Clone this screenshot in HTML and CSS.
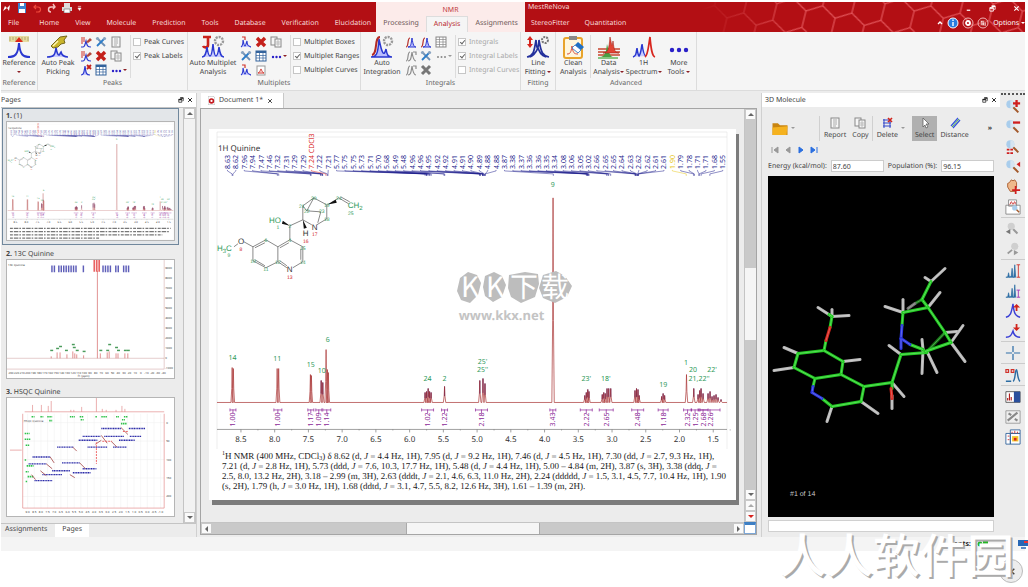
FILE: index.html
```html
<!DOCTYPE html>
<html lang="en">
<head>
    <meta charset="UTF-8">
    <meta name="viewport" content="width=device-width, initial-scale=1.0">
    <title>MestReNova</title>
    <link rel="stylesheet" href="styles.css">
</head>
<body>
    <svg class="defs" aria-hidden="true">
      <defs>
        <symbol id="i-reference" viewBox="0 0 24 24">
          <rect x="2" y="1" width="20" height="6" fill="#e6dca0"/>
          <path d="M3 2v4M6 2v3M9 2v4M15 2v4M18 2v3M21 2v4" stroke="#999060" stroke-width=".7"/>
          <path d="M8 7l4-5 4 5z" fill="#e02818"/>
          <path d="M1 22c7 0 10-2 11-14 1 12 4 14 11 14" fill="none" stroke="#2a38d0" stroke-width="2"/>
        </symbol>
        <symbol id="i-autopeak" viewBox="0 0 24 24">
          <path d="M5 11l9-9 7-1-3 4 1 3-4 1-3 3-5 1z" fill="#c9b52c" stroke="#77691c"/>
          <path d="M7 11l5-5" stroke="#fff6b0" stroke-width="1.5"/>
          <path d="M1 22c7 0 8-2 9-9 1 5 2 7 3 7s1-2 2-3c1 4 3 5 7 5" fill="#c9ccff" stroke="#2a38d0" stroke-width="1.6"/>
        </symbol>
        <symbol id="i-multiplet" viewBox="0 0 24 24">
          <path d="M2 2h8M7 2v8c0 3-4 3-5 1" fill="none" stroke="#c9221c" stroke-width="2.6"/>
          <circle cx="18" cy="6" r="4" fill="none" stroke="#999" stroke-width="2.4" stroke-dasharray="2 1"/>
          <path d="M1 22c3 0 4-3 5-10 1 7 2 9 3 9s2-2 3-12c1 10 2 12 3 12s2-2 3-9c1 7 2 10 5 10" fill="#c9ccff" stroke="#2a38d0" stroke-width="1.5"/>
        </symbol>
        <symbol id="i-integration" viewBox="0 0 24 24">
          <path d="M1 22c5 0 7-2 8-18 3 15 5 18 7 10 1 6 2 8 6 8z" fill="#b9bdff" stroke="#2a38d0" stroke-width="1.5"/>
          <path d="M2 20c6-1 2-18 8-18" fill="none" stroke="#b32a25" stroke-width="2"/>
          <circle cx="18" cy="6" r="4" fill="none" stroke="#999" stroke-width="2.4" stroke-dasharray="2 1"/>
        </symbol>
        <symbol id="i-fitting" viewBox="0 0 24 24">
          <path d="M4 1l3 4H5v4h2l-3 4-3-4h2V5H1z" fill="#d6231c"/>
          <path d="M1 22c6-1 7-4 9-17 1 12 2 12 3 0 2 13 4 16 10 17M4 22c5-2 6-5 8-9 2 5 3 7 8 9" fill="none" stroke="#23309c" stroke-width="1.7"/>
          <circle cx="19" cy="5" r="3" fill="none" stroke="#777" stroke-width="2" stroke-dasharray="2 1"/>
        </symbol>
        <symbol id="i-clean" viewBox="0 0 24 24">
          <rect x="3" y="3" width="18" height="20" rx="2" fill="#fff6dc" stroke="#e8a32b" stroke-width="2"/>
          <rect x="8" y="1" width="8" height="4" fill="#888"/>
          <path d="M6 19c3 0 4-1 5-8 1 7 2 8 6 8" fill="none" stroke="#d64a3c"/>
          <path d="M11 13l6-6 6 5-6 6z" fill="#1f6fc4"/>
          <path d="M11 13l3-3 6 5-3 3z" fill="#fff" stroke="#1f6fc4" stroke-width=".7"/>
        </symbol>
        <symbol id="i-data" viewBox="0 0 24 24">
          <path d="M1 14h22M1 17h22M1 20h22" stroke="#c8452f" stroke-width="1.4"/>
          <path d="M3 22c5 0 6-5 7-13 2 8 3 13 6 13z" fill="#4aa043"/>
          <path d="M6 18c5 0 6-4 7-16 2 9 2 11 3 4 1 9 2 12 6 12z" fill="#e14434" stroke="#a82015" stroke-width=".6"/>
          <path d="M1 23h20" stroke="#58b04e" stroke-width="1.4"/>
        </symbol>
        <symbol id="i-spectrum" viewBox="0 0 24 24">
          <path d="M1 22c3-1 3-3 4-9 1 7 2 8 2 8 2-3 2-6 3-12 1 7 2 12 4 12" fill="#c9ccff" stroke="#2a38d0" stroke-width="1.5"/>
          <path d="M13 22c3-2 3-8 5-20 1 12 2 19 5 20" fill="none" stroke="#d8261e" stroke-width="1.7"/>
        </symbol>
        <symbol id="i-more" viewBox="0 0 24 24">
          <g fill="#2a20c8"><circle cx="5" cy="15" r="2.200"/><circle cx="12" cy="15" r="2.200"/><circle cx="19" cy="15" r="2.200"/></g>
        </symbol>
        <symbol id="i-pick" viewBox="0 0 12 12">
          <path d="M1 11h2c2 0 2-3 3-6 1 4 1 6 5 6" fill="none" stroke="#2a38d0" stroke-width="1.2"/>
          <path d="M2 1v7M4 1v5" stroke="#d0322b"/>
          <path d="M6 6l4-4 2 2-4 3z" fill="#b3483c"/>
        </symbol>
        <symbol id="i-pickdel" viewBox="0 0 12 12">
          <path d="M1 11c3 0 3-3 4-9 1 7 1 9 5 9" fill="#c9ccff" stroke="#2a38d0" stroke-width="1.2"/>
          <path d="M7 1l4 4M11 1l-4 4" stroke="#c4201a" stroke-width="1.8"/>
        </symbol>
        <symbol id="i-peaks" viewBox="0 0 12 12">
          <path d="M1 11c2-1 2-4 2-7 1 4 1 6 2 6s1-3 2-5c0 3 1 5 2 5s1 1 2 1" fill="#c9ccff" stroke="#2a38d0" stroke-width="1.1"/>
          <path d="M2 1h3v3" fill="none" stroke="#d0322b" stroke-width="1.2"/>
        </symbol>
        <symbol id="i-integral" viewBox="0 0 12 12">
          <path d="M3 11c3 0 3-3 4-9 1 7 2 9 4 9z" fill="#b9bdff" stroke="#2a38d0"/>
          <path d="M1 11c3 0 1-9 4-9" fill="none" stroke="#b32a25" stroke-width="1.2"/>
        </symbol>
        <symbol id="i-integral-off" viewBox="0 0 12 12">
          <path d="M3 11c3 0 3-3 4-9 1 7 2 9 4 9M1 11c3 0 1-9 4-9M8 2h3v3" fill="none" stroke="#8d8d8d" stroke-width="1.2"/>
        </symbol>
        <symbol id="i-tools" viewBox="0 0 12 12">
          <path d="M2 2l8 8" stroke="#6d8fb5" stroke-width="1.8"/>
          <path d="M10 2l-8 8" stroke="#2b7cc9" stroke-width="1.8"/>
          <circle cx="2.500" cy="2.500" r="1.600" fill="#8aa4c0"/><circle cx="9.500" cy="2.500" r="1.600" fill="#8aa4c0"/>
        </symbol>
        <symbol id="i-cross" viewBox="0 0 12 12">
          <path d="M2 2l8 8M10 2l-8 8" stroke="#c4201a" stroke-width="3.400"/>
        </symbol>
        <symbol id="i-cross-off" viewBox="0 0 12 12">
          <path d="M2 2l8 8M10 2l-8 8" stroke="#777" stroke-width="3"/>
        </symbol>
        <symbol id="i-report" viewBox="0 0 12 12">
          <rect x="2" y="1" width="8" height="10" fill="#f6f6f6" stroke="#888"/>
          <path d="M4 3h4M4 5h4M4 7h4M4 9h3" stroke="#999" stroke-width=".8"/>
        </symbol>
        <symbol id="i-copy" viewBox="0 0 12 12">
          <rect x="1" y="1" width="6" height="8" fill="#f6f6f6" stroke="#888"/>
          <rect x="5" y="3" width="6" height="8" fill="#f6f6f6" stroke="#888"/>
          <path d="M6 6h4M6 8h4M8 4v6" stroke="#aaa" stroke-width=".7"/>
        </symbol>
        <symbol id="i-table" viewBox="0 0 12 12">
          <rect x="1" y="1" width="10" height="10" fill="#fff" stroke="#33639c"/>
          <path d="M1 2h10" stroke="#33639c" stroke-width="2"/>
          <path d="M1 5.500h10M1 8h10M4.500 2v9M8 2v9" stroke="#33639c" stroke-width=".7"/>
        </symbol>
        <symbol id="i-table-off" viewBox="0 0 12 12">
          <rect x="1" y="1" width="10" height="10" fill="#fff" stroke="#888"/>
          <path d="M1 3.500h10M1 6h10M1 8.500h10M4.500 1v10M8 1v10" stroke="#888" stroke-width=".7"/>
        </symbol>
        <symbol id="i-page" viewBox="0 0 12 12">
          <rect x="2" y="2" width="8" height="9" fill="#fff" stroke="#999"/>
          <path d="M3 9c3-1 2-4 3-4s0 3 3 4z" fill="none" stroke="#d0322b"/>
        </symbol>
        <symbol id="i-dots" viewBox="0 0 12 12">
          <g fill="#2a20c8"><circle cx="3" cy="7" r="1.200"/><circle cx="6.500" cy="7" r="1.200"/><circle cx="10" cy="7" r="1.200"/></g>
        </symbol>
        <symbol id="i-dots-off" viewBox="0 0 12 12">
          <g fill="#888"><circle cx="3" cy="7" r="1"/><circle cx="6.500" cy="7" r="1"/><circle cx="10" cy="7" r="1"/></g>
        </symbol>
        <symbol id="i-restore" viewBox="0 0 8 8">
          <path d="M3 1h4v4H6M1 3h4v4H1z" fill="none" stroke="currentColor"/><path d="M1 3.500h4M3 1.500h4" stroke="currentColor" stroke-width="1.400"/>
        </symbol>
        <symbol id="i-close" viewBox="0 0 8 8">
          <path d="M1.500 1.500l5 5M6.500 1.500l-5 5" stroke="currentColor" stroke-width="1.300"/>
        </symbol>
        <symbol id="i-lens" viewBox="0 0 18 18">
          <path d="M9 9l6 6" stroke="#a3592b" stroke-width="2.200"/>
          <circle cx="6" cy="6" r="4.500" fill="#a9cdec"/>
          <path d="M6 1.500a4.500 4.500 0 0 1 0 9z" fill="#d5e4f1"/>
        </symbol>
        <symbol id="i-lens-off" viewBox="0 0 18 18">
          <path d="M9 9l5 5" stroke="#999" stroke-width="2.200"/>
          <circle cx="7" cy="6" r="4" fill="#cfcfcf"/>
        </symbol>
      </defs>
    </svg>

    <div class="app">
      <header class="titlebar">
        <div class="title-main">
          <div class="quick">
            <svg class="quick-icon" viewBox="0 0 10 10"><path d="M1 8l2-5 2 2 3-3-1 6-2-3z" fill="#fff"/></svg>
            <svg class="quick-icon" viewBox="0 0 10 10"><path d="M1 0h8v10H1z" fill="#3d83cf"/><path d="M3 0h4v3H3zM2 6h6v4H2z" fill="#fff"/></svg>
            <svg class="quick-icon" viewBox="0 0 10 10"><path d="M2 4h4a2 2 0 0 1 0 5H4M4 2L2 4l2 2" fill="none" stroke="#ef4a3c" stroke-width="1.200"/></svg>
            <svg class="quick-icon" viewBox="0 0 10 10"><path d="M8 4H4a2 2 0 0 0 0 5M6 1l2 3-2 2" fill="none" stroke="#f3c2c0" stroke-width="1.400"/></svg>
            <svg class="quick-icon" viewBox="0 0 10 10"><path d="M2 0h6v4H2zM0 4h10v4H0z" fill="#ddd"/><path d="M2 6h6v4H2z" fill="#fff" stroke="#777" stroke-width=".7"/></svg>
            <svg class="quick-more" viewBox="0 0 6 10"><path d="M1 3h4M1 5h4l-2 3z" fill="#fff" stroke="#fff" stroke-width=".7"/></svg>
          </div>
          <nav class="tabs">
            <a class="tab tab-file" href="#">File</a>
            <a class="tab" href="#">Home</a>
            <a class="tab" href="#">View</a>
            <a class="tab" href="#">Molecule</a>
            <a class="tab" href="#">Prediction</a>
            <a class="tab" href="#">Tools</a>
            <a class="tab" href="#">Database</a>
            <a class="tab" href="#">Verification</a>
            <a class="tab" href="#">Elucidation</a>
          </nav>
        </div>
        <div class="title-nmr">
          <div class="context-name">NMR</div>
          <nav class="tabs">
            <a class="tab" href="#">Processing</a>
            <a class="tab tab-active" href="#">Analysis</a>
            <a class="tab" href="#">Assignments</a>
          </nav>
        </div>
        <div class="title-rest">
          <svg class="hexes" aria-hidden="true">
            <defs>
              <pattern id="hex" width="30" height="52" patternUnits="userSpaceOnUse" patternTransform="rotate(14)">
                <path d="M0 9L15 0l15 9v17l-15 9-15-9zM15 35v17" fill="none" stroke="#e2555a" stroke-width="1.200"/>
              </pattern>
            </defs>
            <rect width="100%" height="100%" fill="url(#hex)"/>
          </svg>
          <div class="title-left">
            <div class="app-name">MestReNova</div>
            <nav class="tabs">
              <a class="tab" href="#">StereoFitter</a>
              <a class="tab" href="#">Quantitation</a>
            </nav>
          </div>
          <div class="title-right">
            <div class="window-buttons">
              <button aria-label="Minimize"><svg viewBox="0 0 8 8"><path d="M2 6h4" stroke="#fff" stroke-width="1.400"/></svg></button>
              <button aria-label="Restore"><svg><use href="#i-restore"/></svg></button>
              <button aria-label="Close"><svg><use href="#i-close"/></svg></button>
            </div>
            <div class="options">
              <svg class="up" viewBox="0 0 8 8"><path d="M2 5l2-2 2 2" fill="none" stroke="#fff" stroke-width="1.400"/></svg>
              <svg viewBox="0 0 12 12"><circle cx="6" cy="6" r="5" fill="#2b7de0" stroke="#fff"/><path d="M6 5v4M6 2.500v1.500" stroke="#fff" stroke-width="1.400"/></svg>
              <svg viewBox="0 0 12 12"><circle cx="6" cy="6" r="5" fill="none" stroke="#f0b4b4"/><circle cx="6" cy="6" r="2" fill="none" stroke="#fff" stroke-width="1.800"/></svg>
              <svg viewBox="0 0 12 12"><circle cx="6" cy="6" r="5" fill="none" stroke="#f0b4b4"/><path d="M3.500 3.500h4v5h-4zM5 5h4v4H5z" fill="#f3d2d2" stroke="#b01010" stroke-width=".5"/></svg>
              <button class="options-button">Options <i class="caret light"></i></button>
            </div>
          </div>
        </div>
      </header>

      <section class="ribbon">
        <div class="group g-reference">
          <div class="group-body">
            <button class="big"><svg><use href="#i-reference"/></svg>Reference<span><i class="caret"></i></span></button>
          </div>
          <div class="group-name">Reference</div>
        </div>
        <div class="group g-peaks">
          <div class="group-body">
            <button class="big w-peak"><svg><use href="#i-autopeak"/></svg>Auto Peak<span>Picking</span></button>
            <div class="minis">
              <button aria-label="Pick peak"><svg><use href="#i-pick"/></svg></button>
              <button aria-label="Peak options"><svg><use href="#i-tools"/></svg></button>
              <button aria-label="Report peaks"><svg><use href="#i-report"/></svg></button>
              <button aria-label="Peak by peak"><svg><use href="#i-pick"/></svg></button>
              <button aria-label="Clear peaks"><svg><use href="#i-cross"/></svg></button>
              <button aria-label="Copy peaks"><svg><use href="#i-copy"/></svg></button>
              <button aria-label="Delete peaks"><svg><use href="#i-pickdel"/></svg></button>
              <button aria-label="Peaks table"><svg><use href="#i-table"/></svg></button>
              <button aria-label="More peaks" class="with-caret"><svg><use href="#i-dots"/></svg><i class="caret"></i></button>
            </div>
            <div class="checks">
              <label><input type="checkbox">Peak Curves</label>
              <label><input type="checkbox" checked>Peak Labels</label>
            </div>
          </div>
          <div class="group-name">Peaks</div>
        </div>
        <div class="group g-multiplets">
          <div class="group-body">
            <button class="big w-multiplet"><svg><use href="#i-multiplet"/></svg>Auto Multiplet<span>Analysis</span></button>
            <div class="minis">
              <button aria-label="Multiplet manual"><svg><use href="#i-peaks"/></svg></button>
              <button aria-label="Clear multiplets"><svg><use href="#i-cross"/></svg></button>
              <button aria-label="Copy multiplets"><svg><use href="#i-copy"/></svg></button>
              <button aria-label="Multiplet options"><svg><use href="#i-tools"/></svg></button>
              <button aria-label="Multiplets table"><svg><use href="#i-table"/></svg></button>
              <button aria-label="More multiplets" class="with-caret"><svg><use href="#i-dots"/></svg><i class="caret"></i></button>
              <button aria-label="J groups"><svg><use href="#i-peaks"/></svg></button>
              <button aria-label="Report multiplets"><svg><use href="#i-page"/></svg></button>
            </div>
            <div class="checks">
              <label><input type="checkbox">Multiplet Boxes</label>
              <label><input type="checkbox" checked>Multiplet Ranges</label>
              <label><input type="checkbox">Multiplet Curves</label>
            </div>
          </div>
          <div class="group-name">Multiplets</div>
        </div>
        <div class="group g-integrals">
          <div class="group-body">
            <button class="big w-integral"><svg><use href="#i-integration"/></svg>Auto<span>Integration</span></button>
            <div class="minis">
              <button aria-label="Manual integral"><svg><use href="#i-integral"/></svg></button>
              <button aria-label="Predefined regions"><svg><use href="#i-integral"/></svg></button>
              <button aria-label="Integrals table"><svg><use href="#i-table-off"/></svg></button>
              <button aria-label="Copy integrals"><svg><use href="#i-integral-off"/></svg></button>
              <button aria-label="Integral options"><svg><use href="#i-tools"/></svg></button>
              <button aria-label="More integrals" class="with-caret"><svg><use href="#i-dots-off"/></svg><i class="caret off"></i></button>
              <button aria-label="Split integral"><svg><use href="#i-integral-off"/></svg></button>
              <button aria-label="Clear integrals"><svg><use href="#i-cross-off"/></svg></button>
            </div>
            <div class="checks disabled">
              <label><input type="checkbox" checked>Integrals</label>
              <label><input type="checkbox" checked>Integral Labels</label>
              <label><input type="checkbox">Integral Curves</label>
            </div>
          </div>
          <div class="group-name">Integrals</div>
        </div>
        <div class="group g-fitting">
          <div class="group-body">
            <button class="big"><svg><use href="#i-fitting"/></svg>Line<span>Fitting <i class="caret"></i></span></button>
          </div>
          <div class="group-name">Fitting</div>
        </div>
        <div class="group g-advanced">
          <div class="group-body">
            <button class="big divided"><svg><use href="#i-clean"/></svg>Clean<span>Analysis</span></button>
            <button class="big"><svg><use href="#i-data"/></svg>Data<span>Analysis<i class="caret"></i></span></button>
            <button class="big"><svg><use href="#i-spectrum"/></svg>1H<span>Spectrum<i class="caret"></i></span></button>
            <button class="big"><svg><use href="#i-more"/></svg>More<span>Tools <i class="caret"></i></span></button>
          </div>
          <div class="group-name">Advanced</div>
        </div>
      </section>

      <main class="work">
        <aside class="pages">
          <div class="panel-head">
            <span>Pages</span>
            <button aria-label="Float"><svg><use href="#i-restore"/></svg></button>
            <button aria-label="Close pages"><svg><use href="#i-close"/></svg></button>
          </div>
          <div class="pages-body">
            <div class="thumbs">
              <figure class="thumb selected">
                <figcaption><b>1.</b> (1)</figcaption>
                <svg viewBox="216 130 513 364">
                  <use href="#spectrum"/>
                  <path d="M224 458h496M224 468h490M224 478h470M224 488h275" stroke="#777" stroke-width="4" stroke-dasharray="9 3 14 3 5 4"/>
                </svg>
              </figure>
              <figure class="thumb">
                <figcaption><b>2.</b> 13C Quinine</figcaption>
                <svg id="carbon" viewBox="6 258 170 120"></svg>
              </figure>
              <figure class="thumb">
                <figcaption><b>3.</b> HSQC Quinine</figcaption>
                <svg id="hsqc" viewBox="6 394 170 120"></svg>
              </figure>
            </div>
            <div class="vbar">
              <button class="arrow up" aria-label="Scroll up"></button>
              <div class="vbar-track"></div>
              <button class="arrow down" aria-label="Scroll down"></button>
            </div>
          </div>
          <nav class="bottom-tabs">
            <a href="#">Assignments</a>
            <a class="current" href="#">Pages</a>
          </nav>
        </aside>

        <section class="document">
          <div class="doc-tabs">
            <div class="doc-tab">
              <svg viewBox="0 0 8 10"><path d="M0 0h6l2 2v8H0z" fill="#fff" stroke="#bbb"/><circle cx="4" cy="5.500" r="2.200" fill="none" stroke="#c4161c" stroke-width="1.800"/></svg>
              <span>Document 1*</span>
              <button aria-label="Close document"><svg><use href="#i-close"/></svg></button>
            </div>
          </div>
          <div class="canvas">
            <div class="canvas-view">
              <article class="paper">
                <svg class="plot" viewBox="209 129 528 321">
                  <g id="spectrum">
                    <path d="M217 132h511v362H217zM217 137h511" fill="none" stroke="#e2e2e2" stroke-width=".6"/>
                    <text class="t8" x="218" y="151">1H Quinine</text>
                    <g id="shifts"></g>
                    <g id="peaks"></g>
                    <g id="integrals"></g>
                    <g id="axis"></g>
                    <g fill="none" stroke="#555" stroke-width=".7">
                      <path d="M234 247l4-3M244 242l9 5M253 247l13-7 12 7v15l-12 6-13-7zM278 247l12-7 13 7v15l-10 6M287 268l-9-6"/>
                      <path d="M255 248l10-5M255 260l10 6M280 248l9-5M301 249v11M280 261l7 5"/>
                      <path d="M290 240v-14l13-6v-14l11-8 13 7v14l-10 6M303 220l9 5M303 206l4 5M307 211l14 1-3 11M314 198l-7 13M331 203l8-5 10 6M341 197l9 5"/>
                    </g>
                    <path d="M290 226l-8-2 1-3zM303 220l1 9 3-1zM327 205l9-5 1 3z" fill="#111"/>
                    <g class="skeleton">
                      <text class="atom green" x="217" y="251">H<tspan class="sub" dy="2">3</tspan><tspan dy="-2">C</tspan></text>
                      <text class="atom green" x="269" y="223">HO</text>
                      <text class="atom green" x="348" y="208">CH<tspan class="sub" dy="2">2</tspan></text>
                      <text class="atom" x="238" y="244">O</text>
                      <text class="atom" x="287" y="272">N</text>
                      <text class="atom" x="312" y="230">N</text>
                      <text class="atom" x="303" y="236">H</text>
                    </g>
                    <g id="atom-numbers"></g>
                  </g>
                </svg>
                <p class="report"><sup>1</sup>H NMR (400 MHz, CDCl<sub>3</sub>) δ 8.62 (d, <i>J</i> = 4.4 Hz, 1H), 7.95 (d, <i>J</i> = 9.2 Hz, 1H), 7.46 (d, <i>J</i> = 4.5 Hz, 1H), 7.30 (dd, <i>J</i> = 2.7, 9.3 Hz, 1H), 7.21 (d, <i>J</i>
                = 2.8 Hz, 1H), 5.73 (ddd, <i>J</i> = 7.6, 10.3, 17.7 Hz, 1H), 5.48 (d, <i>J</i> = 4.4 Hz, 1H), 5.00 – 4.84 (m, 2H), 3.87 (s, 3H), 3.38 (ddq, <i>J</i> = 2.5, 8.0, 13.2 Hz,
                2H), 3.18 – 2.99 (m, 3H), 2.63 (dddt, <i>J</i> = 2.1, 4.6, 6.3, 11.0 Hz, 2H), 2.24 (ddddd, <i>J</i> = 1.5, 3.1, 4.5, 7.7, 10.4 Hz, 1H), 1.90 (s, 2H), 1.79 (h, <i>J</i> =
                3.0 Hz, 1H), 1.68 (ddtd, <i>J</i> = 3.1, 4.7, 5.5, 8.2, 12.6 Hz, 3H), 1.61 – 1.39 (m, 2H).</p>
                <div class="kkx">
                  <svg viewBox="0 0 116 34">
                    <path d="M3 8l8-6 9 3 4 8-3 12-8 8-9-3-4-9zM28 6l9-4 8 4 4 9-4 12-9 5-8-6-2-9zM52 5l16-3 13 2 1 10-4 13-14 6-10-6-3-9zM86 5l13-4 9 5 7 10-5 11-12 6-12-5-4-10z" fill="#bdbdbd"/>
                    <text x="4 29 53 84" y="27">KK下载</text>
                  </svg>
                  <span>www.kkx.net</span>
                </div>
              </article>
            </div>
            <div class="vbar doc-vbar">
              <button class="arrow up" aria-label="Scroll up"></button>
              <div class="vbar-track">
                <div class="vbar-thumb"></div>
              </div>
              <button class="arrow down" aria-label="Scroll down"></button>
              <button class="arrow up pale" aria-label="Previous page"></button>
              <button class="arrow down red" aria-label="Next page"></button>
            </div>
            <div class="hbar">
              <button class="arrow left" aria-label="Scroll left"></button>
              <div class="hbar-track">
                <div class="hbar-thumb"></div>
              </div>
              <button class="arrow right" aria-label="Scroll right"></button>
            </div>
            <button class="corner" aria-label="Page layout"></button>
          </div>
        </section>

        <aside class="molecule">
          <div class="panel-head">
            <span>3D Molecule</span>
            <button aria-label="Float"><svg><use href="#i-restore"/></svg></button>
            <button aria-label="Close molecule"><svg><use href="#i-close"/></svg></button>
          </div>
          <div class="mol-body">
            <div class="mol-tools">
              <button class="folder" aria-label="Open"><svg viewBox="0 0 16 14"><path d="M1 2h5l2 2h7v9H1z" fill="#c98510"/><path d="M1 6l14-1-1 8H1z" fill="#f5b21f"/></svg><i class="caret off"></i></button>
              <button class="tool first"><svg><use href="#i-report"/></svg>Report</button>
              <button class="tool"><svg><use href="#i-copy"/></svg>Copy</button>
              <button class="tool first"><svg viewBox="0 0 12 12"><path d="M2 3h8M2 6h8M2 9h8M3 2v9M9 2v9" stroke="#3347c9"/><path d="M7 1l4 4M11 1l-4 4" stroke="#d0231c" stroke-width="1.600"/></svg>Delete</button>
              <i class="caret off"></i>
              <button class="tool pressed"><svg viewBox="0 0 12 12"><path d="M4 1v9l2-2 1 3 2-1-2-3h3z" fill="#fff" stroke="#555" stroke-width=".7"/></svg>Select</button>
              <button class="tool"><svg viewBox="0 0 12 12"><path d="M2 9l7-8M4 11l7-8" stroke="#3a55dd" stroke-width="1.300"/><path d="M3 10l7-8" stroke="#4cae4a"/></svg>Distance</button>
              <span class="more">»</span>
            </div>
            <div class="mol-nav">
              <button aria-label="First" disabled><svg viewBox="0 0 8 8"><path d="M1 1v6M7 1L3 4l4 3z" fill="currentColor" stroke="currentColor"/></svg></button>
              <button aria-label="Previous" disabled><svg viewBox="0 0 8 8"><path d="M6 1L2 4l4 3z" fill="currentColor" stroke="currentColor"/></svg></button>
              <button aria-label="Next"><svg viewBox="0 0 8 8"><path d="M2 1l4 3-4 3z" fill="currentColor" stroke="currentColor"/></svg></button>
              <button aria-label="Last"><svg viewBox="0 0 8 8"><path d="M7 1v6M1 1l4 3-4 3z" fill="currentColor" stroke="currentColor"/></svg></button>
            </div>
            <div class="mol-fields">
              <label for="energy">Energy (kcal/mol):</label>
              <input id="energy" type="text" value="87.60">
              <label for="population">Population (%):</label>
              <input id="population" type="text" value="96.15">
            </div>
            <div class="viewer">
              <svg id="conformer" viewBox="768 176 226 340"></svg>
            </div>
            <input class="mol-status" type="text" aria-label="Message">
          </div>
        </aside>

        <aside class="strip">
          <button aria-label="Zoom in"><svg viewBox="0 0 18 18"><use href="#i-lens"/><path d="M13 1v8M9 5h8" stroke="#cf1f1f" stroke-width="2.600"/></svg></button>
          <button aria-label="Zoom out"><svg viewBox="0 0 18 18"><use href="#i-lens"/><path d="M9 4h8" stroke="#cf1f1f" stroke-width="2.600"/></svg></button>
          <button aria-label="Full spectrum"><svg viewBox="0 0 18 18"><use href="#i-lens"/><path d="M2 11h3v2H2zM6 11h3v2H6zM2 15h3v2H2zM6 15h3v2H6z" fill="#cf1f1f"/></svg></button>
          <button aria-label="Manual zoom"><svg viewBox="0 0 18 18"><use href="#i-lens"/><path d="M17 3v6l-4-3z" fill="#cf1f1f"/></svg></button>
          <button aria-label="Pan"><svg viewBox="0 0 18 18"><path d="M3 9V5l2-1 2-3 2 1 2-1 2 3v5l-2 5H6z" fill="#efb98b" stroke="#a85a2b"/><path d="M12 8v9M8 12.500h9" stroke="#cf1f1f" stroke-width="2"/></svg></button>
          <button class="last" aria-label="Expansion"><svg viewBox="0 0 18 18"><path d="M1 7h16v10H1zM4 1h9v7H4z" fill="#fff" stroke="#888"/><path d="M5 6c2 0 1-3 2-3s1 3 2 3 1-3 2-3 0 3 1 3" fill="none" stroke="#c33"/><circle cx="11" cy="10" r="3" fill="#a9cdec"/><path d="M13 12l3 3" stroke="#a3592b" stroke-width="1.600"/></svg></button>
          <button aria-label="Previous zoom"><svg viewBox="0 0 18 18"><use href="#i-lens-off"/><path d="M6 9v6l-5-3z" fill="#777"/></svg></button>
          <button class="last" aria-label="Next zoom"><svg viewBox="0 0 18 18"><path d="M3 14l5-4" stroke="#999" stroke-width="2"/><circle cx="11" cy="6" r="4" fill="#cfcfcf"/><path d="M10 10v6l5-3z" fill="#999"/></svg></button>
          <button aria-label="Fit to height"><svg viewBox="0 0 18 18"><path d="M1 16h2l1-5 1 5 2-1 1-9 1 10 1 0 1-14 1 14z" fill="#2b6ca3" stroke="#2b6ca3" stroke-width=".8"/><path d="M15 2v14M13 2h4M13 16h4" stroke="#d0322b"/></svg></button>
          <button aria-label="Fit to highest"><svg viewBox="0 0 18 18"><path d="M1 16h2l1-5 1 5 2-1 1-9 1 10 1 0 1-14 1 14z" fill="#2b6ca3" stroke="#2b6ca3" stroke-width=".8"/><path d="M15 8v8M13 8h4M13 16h4" stroke="#a334b5"/></svg></button>
          <button aria-label="Increase intensity"><svg viewBox="0 0 18 18"><path d="M1 16c5-1 6-4 8-15 1 11 3 14 8 15" fill="none" stroke="#3a3fd6" stroke-width="1.600"/><path d="M12 9V5h-3l4-4 4 4h-3v4z" fill="#d0231c"/></svg></button>
          <button class="last" aria-label="Decrease intensity"><svg viewBox="0 0 18 18"><path d="M1 16c5 0 6-2 8-7 1 5 3 7 8 7" fill="none" stroke="#3a3fd6" stroke-width="1.600"/><path d="M12 1v4h-3l4 4 4-4h-3V1z" fill="#d0231c"/></svg></button>
          <button class="last" aria-label="Crosshair"><svg viewBox="0 0 18 18"><path d="M9 1v7M9 10v7M1 9h7M10 9h7" stroke="#2f6ea8" stroke-width="1.400"/></svg></button>
          <button class="last" aria-label="Cuts"><svg viewBox="0 0 18 18"><path d="M1 3h3v3H1zM7 3h3v3H7z" fill="none" stroke="#d0322b" stroke-width="1.300"/><path d="M1 16h6M9 16c3-1 2-13 4-13 1 0 1 12 4 13" fill="none" stroke="#2b6ca3" stroke-width="1.600"/></svg></button>
          <button aria-label="Trace view"><svg viewBox="0 0 18 18"><path d="M1 3h16v12H1z" fill="#fff" stroke="#555"/><path d="M10 3h7v12h-7z" fill="#2a4f9c"/><path d="M3 13v-3M5 13V5M7 13v-4" stroke="#b02020" stroke-width="1.300"/></svg></button>
          <button aria-label="Contour view"><svg viewBox="0 0 18 18"><path d="M1 2h16v14H1z" fill="#eee" stroke="#999"/><path d="M3 13l11-9M4 5l3 2M11 11l3 2" stroke="#888" stroke-width="2.400"/></svg></button>
          <button aria-label="Show traces"><svg viewBox="0 0 18 18"><path d="M6 1h11v4H6zM1 5h5v12H1zM6 5h11v12H6z" fill="#fff" stroke="#33639c"/><path d="M8 3v2M11 2v3M14 3v2M3 8h2M3 12h2" stroke="#c33"/><path d="M8 8h7v6H8z" fill="#f5c62a"/><path d="M10 10h3v3h-3z" fill="#d8261e"/></svg></button>
        </aside>
      </main>

      <footer class="statusbar">
        <span>ents:</span>
        <svg viewBox="0 0 12 10"><circle cx="3" cy="5" r="2.500" fill="#25b425"/><path d="M6 2h5v5H6z" fill="#25b425"/></svg>
        <svg viewBox="0 0 12 10"><path d="M1 1h10v6H1z" fill="#2867b5"/><path d="M4 9h5" stroke="#2867b5" stroke-width="1.500"/><path d="M7 3h5" stroke="#e33" stroke-width="2"/></svg>
      </footer>
    </div>

    <div class="site-mark">人人软件园</div>
    <button class="round-close" aria-label="Collapse"><svg><use href="#i-close"/></svg></button>

    <script src="script.js"></script>
</body>
</html>
```
FILE: styles.css
```css
* {
    box-sizing: border-box;
}

body {
    margin: 0;
    padding: 2px 3px 36px 1px;
    height: 100vh;
    display: flex;
    flex-direction: column;
    background: #fff;
    color: #444;
    font: 7px/9px "Noto Sans", "Open Sans", sans-serif;
    text-rendering: geometricPrecision;
}

a {
    color: inherit;
    text-decoration: none;
}

button {
    border: 0;
    padding: 0;
    background: none;
    color: inherit;
    font: inherit;
    text-rendering: inherit;
}

input {
    margin: 0;
    font: inherit;
    color: inherit;
}

.defs {
    position: absolute;
    width: 0;
    height: 0;
}

.app {
    flex: 1;
    min-height: 0;
    display: flex;
    flex-direction: column;
    background: #ececec;
}

.caret {
    display: inline-block;
    border: 2px solid transparent;
    border-top-color: #8c1f24;
    border-bottom: 0;
    vertical-align: middle;
}

.caret.light {
    border-top-color: #fff;
}

.caret.off {
    border-top-color: #999;
}

/* title bar */
.titlebar {
    display: flex;
    height: 30px;
    background: #b30f14;
    color: #f5d9d9;
}

.title-main {
    width: 375px;
}

.quick {
    display: flex;
    align-items: center;
    gap: 5px;
    height: 12px;
    padding-left: 1px;
}

.quick-icon {
    width: 10px;
    height: 10px;
}

.quick-more {
    width: 5px;
    height: 8px;
}

.tabs {
    display: flex;
    height: 16px;
    line-height: 16px;
}

.title-main .tabs,
.title-left .tabs {
    margin-top: 2px;
}

.tab {
    padding: 0 8px;
}

.tab-file {
    padding: 0 12px 0 7px;
}

.title-nmr {
    width: 149px;
    background: #fcebea;
    color: #6b5555;
}

.context-name {
    height: 14px;
    line-height: 17px;
    text-align: center;
    color: #c03a3e;
}

.title-nmr .tabs {
    justify-content: center;
}

.title-nmr .tab {
    padding: 0 7px;
}

.title-nmr .tab-active {
    background: #f5f5f5;
    color: #b8282d;
    border: 1px solid #ddd;
    border-bottom: 0;
    line-height: 15px;
}

.title-rest {
    position: relative;
    flex: 1;
    display: flex;
    justify-content: space-between;
}

.hexes {
    position: absolute;
    right: 0;
    top: 0;
    width: 325px;
    height: 30px;
    -webkit-mask-image: linear-gradient(to right, transparent, #000 30%);
    mask-image: linear-gradient(to right, transparent, #000 30%);
}

.app-name {
    height: 12px;
    line-height: 11px;
    padding-left: 3px;
}

.title-left .tab {
    padding: 0 9px 0 6px;
}

.title-right {
    position: relative;
    color: #fff;
}

.window-buttons {
    display: flex;
    justify-content: flex-end;
    gap: 17px;
    height: 12px;
    padding: 1px 5px 0 0;
}

.window-buttons svg {
    display: block;
    width: 7px;
    height: 7px;
}

.options {
    display: flex;
    align-items: center;
    gap: 3px;
    margin-top: 3px;
}

.options svg {
    width: 12px;
    height: 12px;
}

.options .up {
    width: 8px;
    height: 8px;
}

.options-button {
    margin-left: 1px;
}

/* ribbon */
.ribbon {
    display: flex;
    height: 59px;
    background: #f5f5f5;
    border-bottom: 1px solid #dcdcdc;
}

.group {
    display: flex;
    flex-direction: column;
    border-right: 1px solid #dcdcdc;
}

.g-reference {
    width: 37px;
}

.g-peaks {
    width: 150px;
}

.g-multiplets {
    width: 173px;
}

.g-integrals {
    width: 160px;
}

.g-fitting {
    width: 35px;
}

.g-advanced {
    width: 141px;
}

.group-body {
    display: flex;
    height: 46px;
    padding-top: 3px;
}

.group-name {
    text-align: center;
    line-height: 12px;
    color: #666;
}

.big {
    display: flex;
    flex-direction: column;
    align-items: center;
    flex: 1;
    white-space: nowrap;
}

.big svg {
    width: 24px;
    height: 24px;
}

.big span {
    height: 9px;
}

.w-peak {
    flex: 0 0 40px;
}

.w-multiplet {
    flex: 0 0 50px;
}

.w-integral {
    flex: 0 0 42px;
}

.divided {
    border-right: 1px solid #dcdcdc;
}

.minis {
    display: grid;
    grid-template-columns: repeat(3, 15px);
    grid-auto-rows: 14px;
    width: 52px;
    flex: none;
}

.minis button {
    display: flex;
    align-items: center;
    justify-content: center;
    gap: 1px;
}

.minis svg {
    width: 12px;
    height: 12px;
    flex: none;
}

.with-caret {
    width: 20px;
}

.checks {
    flex: 1;
    padding-left: 2px;
    border-left: 1px solid #dcdcdc;
    white-space: nowrap;
}

.checks label {
    display: flex;
    align-items: center;
    gap: 3px;
    height: 14px;
}

.checks input {
    appearance: none;
    width: 8px;
    height: 8px;
    border: 1px solid #c6c6c6;
    background: #fff;
    position: relative;
}

.checks input:checked::after {
    content: "";
    position: absolute;
    left: 2px;
    top: 0;
    width: 2px;
    height: 4px;
    border: solid #666;
    border-width: 0 1px 1px 0;
    transform: rotate(40deg);
}

.disabled {
    color: #a8a8a8;
}

/* work area */
.work {
    flex: 1;
    min-height: 0;
    display: flex;
    padding-top: 2px;
}

.panel-head {
    display: flex;
    align-items: center;
    gap: 3px;
    height: 14px;
    padding-right: 3px;
    background: #fff;
}

.panel-head span {
    flex: 1;
}

.panel-head svg {
    display: block;
    width: 6px;
    height: 6px;
    color: #222;
}

.pages {
    width: 196px;
    display: flex;
    flex-direction: column;
    border-right: 1px solid #d0d0d0;
}

.pages-body {
    flex: 1;
    min-height: 0;
    display: flex;
    border: 1px solid #c4c4c4;
    border-left: 0;
}

.thumbs {
    flex: 1;
    display: flex;
    flex-direction: column;
    gap: 1px;
    padding: 0 4px 0 1px;
    overflow: hidden;
}

.thumb {
    flex: none;
    margin: 0;
    padding: 3px;
    border: 1px solid transparent;
}

.thumb.selected {
    border-color: #70879c;
    background: #e3e6e9;
}

.thumb svg {
    display: block;
    width: 100%;
    height: 120px;
    background: #fff;
    border: 1px solid #b5b5b5;
}

.vbar {
    width: 12px;
    flex: none;
    display: flex;
    flex-direction: column;
    border: solid #c4c4c4;
    border-width: 0 0 0 1px;
}

.vbar-track {
    flex: 1;
    background: #f2f2f2;
}

.arrow {
    display: flex;
    align-items: center;
    justify-content: center;
    width: 11px;
    height: 11px;
    flex: none;
    background: #fafafa;
    border: 1px solid #c9c9c9;
}

.arrow::after {
    content: "";
    border: 3px solid transparent;
}

.arrow.up::after {
    border-bottom-color: #666;
    border-top: 0;
}

.arrow.down::after {
    border-top-color: #666;
    border-bottom: 0;
}

.arrow.left::after {
    border-right-color: #666;
    border-left: 0;
}

.arrow.right::after {
    border-left-color: #666;
    border-right: 0;
}

.arrow.pale::after {
    border-bottom-color: #aaa;
}

.arrow.red::after {
    border-top-color: #d8201c;
}

.bottom-tabs {
    display: flex;
    height: 13px;
    line-height: 12px;
}

.bottom-tabs a {
    padding: 0 8px 0 4px;
}

.bottom-tabs .current {
    padding: 0 7px;
    background: #fff;
}

/* document */
.document {
    flex: 1;
    min-width: 0;
    margin-left: 3px;
    display: flex;
    flex-direction: column;
}

.doc-tabs {
    height: 15px;
    display: flex;
    padding-left: 1px;
}

.doc-tab {
    display: flex;
    align-items: center;
    gap: 4px;
    padding: 0 10px 0 7px;
    background: #fff;
    border-right: 1px solid #c8c8c8;
}

.doc-tab > svg {
    width: 7px;
    height: 9px;
}

.doc-tab button svg {
    display: block;
    width: 6px;
    height: 6px;
}

.canvas {
    flex: 1;
    min-height: 0;
    display: grid;
    grid-template-columns: 1fr 12px;
    grid-template-rows: 1fr 12px;
    margin: 0 2px 2px 0;
    border: 1px solid #a5a5a5;
}

.canvas-view {
    min-width: 0;
    min-height: 0;
    overflow: hidden;
    padding: 20px 8px 0;
}

.paper {
    position: relative;
    padding-bottom: 9px;
    background: #fff;
    box-shadow: 3px 5px 0 #7c7c7c;
}

.plot {
    display: block;
    width: 100%;
}

.plot text,
.thumb text {
    fill: #333;
}

.t8 {
    font-size: 8px;
}

.t3 {
    font-size: 3px;
}

.mid {
    text-anchor: middle;
}

text.shift {
    fill: #1c1c8c;
}

text.solvent {
    fill: #d81e1e;
}

text.yellow {
    fill: #e6c619;
}

text.green,
text.assign {
    fill: #2f9a5a;
}

text.integral {
    fill: #8a1f96;
    font-size: 7px;
}

.atom {
    font: 8px "Liberation Sans", sans-serif;
}

.sub {
    font-size: 6px;
}

.number {
    font: 5px "Liberation Sans", sans-serif;
    text-anchor: middle;
}

text.number.red {
    fill: #d02020;
}

.report {
    margin: 0 4px 0 13px;
    padding-top: 2px;
    color: #222;
    font: 9px/10px "Liberation Serif", serif;
}

.report sup,
.report sub {
    font-size: 6px;
    line-height: 0;
}

.report sub {
    vertical-align: -1px;
}

.kkx {
    position: absolute;
    left: 47%;
    top: 141px;
    width: 116px;
}

.kkx svg {
    display: block;
    width: 116px;
    height: 34px;
    overflow: visible;
}

.kkx text {
    fill: #fff;
    font: 28px "Noto Sans CJK SC", sans-serif;
}

.kkx span {
    display: block;
    padding: 4px 2px;
    color: #c4c4c4;
    font: bold 13px/14px "Noto Sans", sans-serif;
}

.doc-vbar .vbar-track,
.hbar-track {
    background: #c9c9c9;
}

.doc-vbar .vbar-track {
    display: flex;
    flex-direction: column;
}

.vbar-thumb {
    margin-top: 148px;
    height: 72px;
    background: #f5f5f5;
}

.hbar {
    display: flex;
    border-top: 1px solid #c4c4c4;
}

.hbar-track {
    flex: 1;
    display: flex;
    justify-content: center;
}

.hbar-thumb {
    width: 134px;
    background: #f5f5f5;
    border: solid #aaa;
    border-width: 0 1px;
}

.corner {
    background: #fff;
    border: 1px solid #7da7d6;
    border-top: 3px solid #3d7fc4;
}

/* 3D molecule */
.molecule {
    width: 239px;
    display: flex;
    flex-direction: column;
    border-left: 1px solid #d0d0d0;
    margin-left: 2px;
}

.molecule .panel-head {
    padding-left: 3px;
}

.mol-body {
    flex: 1;
    min-height: 0;
    display: flex;
    flex-direction: column;
    padding: 3px 6px 5px;
}

.mol-tools {
    display: flex;
    align-items: center;
    height: 36px;
}

.folder {
    display: flex;
    align-items: center;
    gap: 2px;
    width: 51px;
    padding-left: 3px;
}

.folder svg {
    width: 18px;
    height: 15px;
}

.tool {
    display: flex;
    flex-direction: column;
    align-items: center;
    gap: 2px;
    padding: 1px 3px;
    height: 25px;
}

.tool svg {
    width: 12px;
    height: 12px;
}

.tool.first {
    border-left: 1px solid #d0d0d0;
    padding-left: 4px;
}

.tool.pressed {
    margin-left: 7px;
    background: #b0b0b0;
}

.more {
    margin-left: auto;
    padding-right: 2px;
    font-weight: bold;
}

.mol-nav {
    display: flex;
    gap: 5px;
    padding: 0 3px;
    height: 14px;
    color: #2a6fe0;
}

.mol-nav button {
    height: 8px;
}

.mol-nav button:disabled {
    color: #999;
}

.mol-nav svg {
    display: block;
    width: 8px;
    height: 8px;
}

.mol-fields {
    display: flex;
    align-items: center;
    gap: 4px;
    margin-bottom: 4px;
    white-space: nowrap;
}

.mol-fields input {
    flex: 1;
    min-width: 0;
    height: 12px;
    padding: 0 1px;
    border: 1px solid #ccc;
    background: #fff;
}

.viewer {
    flex: 1;
    min-height: 0;
    background: #000;
}

.viewer svg {
    display: block;
    width: 100%;
    height: 100%;
}

.viewer text {
    fill: #ccc;
    font: 7px "Liberation Sans", sans-serif;
}

.mol-status {
    height: 12px;
    margin-top: 3px;
    border: 1px solid #d0d0d0;
    background: #fff;
}

/* tool strip */
.strip {
    width: 24px;
    margin-left: 1px;
    padding-top: 4px;
    border-top: 2px dotted #555;
    display: flex;
    flex-direction: column;
    align-items: center;
    gap: 3px;
}

.strip button {
    width: 100%;
    height: 17px;
    flex: none;
    text-align: center;
}

.strip .last {
    height: 19px;
    border-bottom: 1px solid #ccc;
}

.strip svg {
    width: 16px;
    height: 16px;
}

.statusbar {
    display: flex;
    justify-content: flex-end;
    align-items: center;
    gap: 6px;
    height: 14px;
    background: #f4f4f4;
    color: #222;
}

.statusbar span {
    font-weight: bold;
}

.statusbar svg {
    width: 12px;
    height: 10px;
}

.statusbar svg:last-child {
    margin-left: 22px;
    margin-right: -4px;
}

.site-mark {
    position: absolute;
    right: 14px;
    bottom: 5px;
    color: #fff;
    font: 500 47px/58px "Noto Sans CJK SC", sans-serif;
    text-shadow: 2px 2px 0 #aaa;
}

.round-close {
    position: absolute;
    right: 5px;
    bottom: 4px;
    display: flex;
    align-items: center;
    justify-content: center;
    width: 24px;
    height: 24px;
    border: 1px solid #bbb;
    border-radius: 50%;
    background: rgba(230, 230, 230, 0.7);
    z-index: -1;
}

.round-close svg {
    width: 9px;
    height: 9px;
}
```
FILE: script.js
```js
const NS = "http://www.w3.org/2000/svg";

function add(parent, tag, attrs, text) {
    const el = document.createElementNS(NS, tag);
    for (const key in attrs) el.setAttribute(key, attrs[key]);
    if (text !== undefined) el.textContent = text;
    parent.appendChild(el);
    return el;
}

function get(id) {
    return document.getElementById(id);
}

// ppm to x
function ppm(v) {
    return 241 + (8.5 - v) * 67.6;
}

// chemical shift labels over the spectrum
const shifts = ("8.63 8.62 7.96 7.94 7.47 7.46 7.32 7.31 7.29 7.29 7.24 7.22 7.21 5.77 5.75 5.75 5.73 5.71 5.70 5.68 " +
    "5.49 5.48 4.96 4.96 4.95 4.92 4.92 4.91 4.91 4.90 4.89 4.88 4.88 3.87 3.38 3.37 3.36 3.36 3.35 3.34 3.08 3.06 " +
    "3.05 3.02 2.66 2.65 2.65 2.64 2.63 2.62 2.62 2.61 2.61 1.90 1.79 1.78 1.71 1.71 1.68 1.55").split(" ");

shifts.forEach((value, i) => {
    const x = 227.5 + i * 8.41;
    let cls = "shift";
    let color = "#1c1c8c";
    if (value === "7.24") { cls = "solvent"; color = "#d81e1e"; }
    if (value === "1.90") { cls = "yellow"; color = "#e6c619"; }
    add(get("shifts"), "text", { class: cls, transform: `translate(${x + 2.5} 169) rotate(-90)` },
        value === "7.24" ? "7.24 CDCl3" : value);
    add(get("shifts"), "path", {
        d: `M${x} 170v1L${ppm(value)} 174v2`, fill: "none", stroke: color, "stroke-width": 0.5
    });
});

// [x, height]
const peaks = [
    [232.2, 35], [233.4, 34], [277.3, 34], [278.8, 34], [310.6, 28], [311.6, 27], [321.4, 22], [323, 20],
    [326.3, 53], [327.6, 33], [328.6, 30], [425.5, 10], [427, 11], [428.6, 14], [430, 11], [431.5, 10], [445, 16],
    [480.3, 22], [483.5, 24], [485.5, 19], [553.7, 205], [585.5, 7], [587, 10], [588.5, 13], [589.7, 11],
    [603, 8], [604.5, 10], [606, 9], [607.8, 14], [609.5, 14], [611.5, 14], [635.8, 12], [637.3, 14], [638.8, 13],
    [640, 7], [662.5, 6], [664, 9], [665.5, 7], [687.4, 28], [694.7, 14], [699, 8], [700.7, 12], [702, 14], [704, 9],
    [709, 9], [711, 11], [713, 6], [715, 7], [717, 8], [719, 5], [722, 3]
];
let line = "M217 403";
peaks.forEach(([x, h]) => {
    line += `L${x - 1.2} 403L${x - 0.4} ${403 - h * 0.4}L${x} ${403 - h}L${x + 0.4} ${403 - h * 0.4}L${x + 1.2} 403`;
});
let tops = "";
peaks.filter(p => p[1] < 25).forEach(([x, h]) => { tops += `M${x} ${403 - h}v${h * 0.6}`; });
add(get("peaks"), "path", { d: tops, stroke: "#2a2a9c", "stroke-width": 1 });
add(get("peaks"), "path", { d: line + "L728 403", fill: "none", stroke: "#a83232", "stroke-width": 0.7 });

[["14", 232.5, 360], ["11", 277.5, 361], ["15", 311, 367], ["10", 322, 373], ["6", 328, 342], ["24", 428, 381],
 ["2", 445, 381], ["25'", 483, 364], ["25''", 483, 372], ["9", 553.5, 187], ["23'", 587, 381], ["18'", 606.5, 381],
 ["19", 664, 387], ["1", 687, 365], ["20", 694, 372], ["21,22''", 700, 381], ["22'", 713, 372]
].forEach(([t, x, y]) => add(get("peaks"), "text", { class: "assign mid", x: x, y: y }, t));

[["1.00", 233, 3], ["1.00", 278, 4], ["1.17", 311, 3], ["1.09", 319, 3], ["1.14", 327, 4], ["1.02", 428, 6],
 ["1.22", 445, 3], ["2.18", 482, 6], ["3.43", 553.5, 3], ["2.22", 587, 6], ["2.65", 607, 7], ["2.48", 638.5, 6],
 ["1.18", 664, 5], ["2.32", 688.5, 4], ["1.25", 696, 4], ["2.68", 704, 5], ["2.26", 711, 10]
].forEach(([t, x, w]) => {
    const g = get("integrals");
    add(g, "path", { d: `M${x - w} 409v3M${x - w} 410.500h${w * 2}M${x + w} 409v3M${x} 410v4`, stroke: "#8a1f96", "stroke-width": 0.7 });
    add(g, "text", { class: "integral", transform: `translate(${x + 2.5} 427) rotate(-90)` }, t);
});

add(get("axis"), "path", { d: "M217 430h511", stroke: "#777", "stroke-width": 0.7 });
for (let v = 8.5; v >= 1.5; v -= 0.5) {
    add(get("axis"), "path", { d: `M${ppm(v)} 430v3M${ppm(v) + 17} 430v1`, stroke: "#777", "stroke-width": 0.7 });
    add(get("axis"), "text", { class: "t8 mid", x: ppm(v), y: 443 }, v.toFixed(1));
}

[[1, 278, 229, "g"], [9, 229, 257, "g"], [8, 241, 251, "r"], [10, 253, 263, "g"], [11, 266, 271, "g"],
 [12, 278, 264, "g"], [13, 290, 279, "r"], [14, 303, 264, "g"], [15, 303, 250, "g"], [16, 306, 243, "r"],
 [17, 315, 236, "r"], [18, 327, 221, "g"], [19, 327, 207, "g"], [20, 314, 200, "g"], [21, 302, 208, "g"],
 [22, 307, 213, "g"], [23, 322, 213, "g"], [24, 339, 200, "g"], [25, 351, 215, "g"], [6, 266, 242, "g"],
 [4, 290, 242, "g"], [2, 290, 228, "g"]
].forEach(([n, x, y, c]) => {
    add(get("atom-numbers"), "text", { class: "number " + (c === "g" ? "green" : "red"), x: x, y: y }, n);
});

// 13C thumbnail
const carbon = get("carbon");
add(carbon, "text", { class: "t3", x: 7, y: 264 }, "13C Quinine");
add(carbon, "path", { d: "M6 358h160M6 369h160M166 258v111", stroke: "#c99", "stroke-width": 0.5 });
add(carbon, "path", {
    d: "M51 358v-2M57 358v-6M60 358v-6M67 358v-4M73 358v-7M75 358v-5M77 358v-4M84 358v-3M101 358v-5M108 358v-6M110 358v-7M117 358v-5M119 358v-5M126 358v-5M129 358v-5M98 358v-89",
    stroke: "#c44", "stroke-width": 0.6
});
for (let i = 0; i <= 10; i++) {
    add(carbon, "text", { class: "t3", x: 167, y: 267 + i * 10.2 }, 9000 - i * 1000);
}
for (let i = 0; i <= 27; i++) {
    add(carbon, "text", { class: "t3 mid", x: 10 + i * 5.75, y: 374 }, 230 - i * 10);
}
add(carbon, "text", { class: "t3 mid", x: 84, y: 377 }, "f1 (ppm)");
add(carbon, "path", {
    d: "M51 267h4M58 267h20M83 267h2M103 267h10M116 267h5M124 267h7",
    stroke: "#1c1c9c", "stroke-width": 7, "stroke-dasharray": "1.500 1", opacity: 0.7
});
add(carbon, "path", { d: "M94 264h7", stroke: "#e02020", "stroke-width": 12, "stroke-dasharray": "1.700 .8", opacity: 0.7 });
[[51, 350], [57, 348], [60, 346], [66, 350], [73, 344], [74, 347], [77, 350], [84, 351], [101, 350], [108, 350],
 [110, 344], [117, 347], [119, 350], [126, 350], [129, 350]
].forEach(([x, y]) => add(carbon, "path", { d: `M${x - 1} ${y}h3`, stroke: "#4b9c5c", "stroke-width": 1.5 }));

// HSQC thumbnail
const hsqc = get("hsqc");
add(hsqc, "text", { class: "t3", x: 23, y: 418 }, "HSQC Quinine");
let grid = "";
for (let i = 0; i <= 20; i++) grid += `M${27 + i * 6.77} 410v96`;
for (let i = 0; i <= 4; i++) grid += `M22 ${419 + i * 18.8}h144`;
add(hsqc, "path", { d: grid, stroke: "#eee", "stroke-width": 0.5 });
add(hsqc, "path", {
    d: "M24 408h142M22 410v96h144v-96M32 408v-7M41 408v-7M48 408v-6M51 408v-11M71 408v-2M74 408v-2M82 408v-5M97 408v-14M103 408v-3M107 408v-2M117 408v-2M123 408v-6M126 408v-3M9 447h12",
    fill: "none", stroke: "#d77", "stroke-width": 0.6
});
add(hsqc, "path", {
    d: "M31 413h3M40 413h3M47 413h5M49 417h3M70 413h5M80 413h4M81 416h3M96 413h2M102 413h6M117 413h3M125 413h4M123 416h3M122 420h6M24 430h5M24 436h6M25 442h4M24 457h2M26 463h7M25 469h3M27 474h6M25 479h2",
    stroke: "#2fc24a", "stroke-width": 1.6, "stroke-dasharray": "1.500 .6"
});
const clusters = [[102, 425, 20], [130, 425, 17], [83, 433, 18], [105, 433, 20], [131, 433, 12], [79, 437, 19],
    [120, 437, 16], [57, 444, 17], [88, 444, 20], [114, 444, 14], [32, 454, 18], [28, 461, 18], [62, 460, 18],
    [83, 466, 14], [52, 468, 18], [73, 470, 18], [42, 472, 20], [34, 478, 18]];
clusters.forEach(([x, y, w]) => {
    add(hsqc, "path", { d: `M${x} ${y}h${w}`, stroke: "#2a2aa8", "stroke-width": 1.4, "stroke-dasharray": "1.200 .5" });
});
add(hsqc, "path", {
    d: "M122 424l7 7M50 454l4 6M46 461l6 5M80 460l6 6M73 444l4 4M40 468l6 5M70 472l5 3M96 441l6-4M102 432l6 8M112 438l6 6M31 472l4 5",
    stroke: "#a55", "stroke-width": 0.9
});
add(hsqc, "path", { d: "M97 439v22M103 438h10M124 428h6", stroke: "#e66", "stroke-width": 1, "stroke-dasharray": "2 1" });
for (let i = 0; i <= 20; i++) {
    add(hsqc, "text", { class: "t3 mid", x: 27 + i * 6.77, y: 511 }, (9 - i * 0.5).toFixed(1));
}
for (let i = 0; i <= 4; i++) {
    add(hsqc, "text", { class: "t3", x: 168, y: 420 + i * 18.8 }, i * 50);
}

// stick model, [x1, y1, x2, y2]
const conformer = get("conformer");
const sticks = {
    "#167a16": [[945, 332, 927, 351], [922, 299, 915, 303]],
    "#777777": [[915, 303, 908, 308]],
    "#b9b9b9": [[832, 316, 818, 307], [832, 316, 832, 309], [832, 316, 849, 315], [798, 353, 784, 347],
        [794, 367, 774, 370], [843, 361, 860, 359], [832, 406, 827, 421], [861, 401, 878, 413], [892, 382, 904, 396],
        [892, 395, 892, 408], [901, 354, 889, 345], [903, 312, 885, 306], [903, 312, 903, 299], [928, 307, 940, 292],
        [931, 281, 945, 268], [931, 281, 925, 277], [951, 342, 963, 325], [951, 342, 965, 361], [945, 332, 957, 331],
        [923, 349, 922, 339], [923, 349, 922, 373], [927, 351, 937, 372]],
    "#22cc22": [[832, 316, 830, 327], [824, 350, 826, 340], [824, 350, 798, 353], [798, 353, 794, 367],
        [794, 367, 815, 378], [815, 378, 841, 374], [841, 374, 843, 361], [843, 361, 824, 350], [815, 378, 813, 386],
        [822, 398, 832, 406], [832, 406, 861, 401], [861, 401, 864, 386], [864, 386, 841, 374], [864, 386, 892, 382],
        [892, 382, 901, 354], [901, 354, 927, 352], [903, 312, 902, 325], [903, 312, 928, 307], [928, 307, 922, 299],
        [922, 299, 931, 281], [928, 307, 945, 332], [945, 332, 951, 342], [951, 342, 925, 351], [923, 349, 910, 344],
        [832, 316, 829, 314], [892, 382, 892, 388]],
    "#d8261e": [[830, 327, 826, 340], [891, 388, 892, 398]],
    "#2a35e0": [[813, 386, 812, 392], [812, 392, 822, 398], [902, 325, 901, 338], [901, 338, 910, 344], [901, 338, 901, 348]]
};
for (const color in sticks) {
    sticks[color].forEach(([x1, y1, x2, y2]) => {
        add(conformer, "line", { x1, y1, x2, y2, stroke: color, "stroke-width": 3, "stroke-linecap": "round" });
        add(conformer, "line", { x1, y1, x2, y2, stroke: "#fff", "stroke-opacity": 0.25, "stroke-width": 1 });
    });
}
add(conformer, "text", { x: 790, y: 495 }, "#1 of 14");
```
